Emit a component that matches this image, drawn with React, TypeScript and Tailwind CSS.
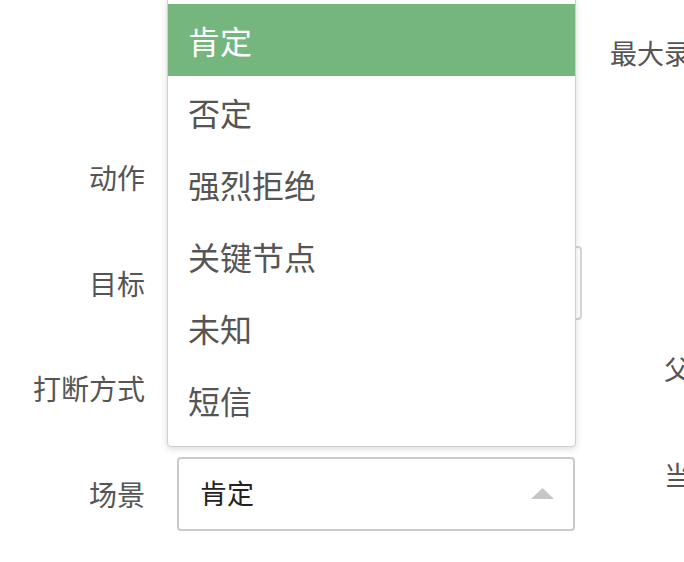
import React from 'react';

const FONT = { fontFamily: '"Noto Sans CJK SC", "Noto Sans", sans-serif' };

const OPTIONS = ['肯定', '否定', '强烈拒绝', '关键节点', '未知', '短信'];

const LEFT_ROWS = [
  { label: '动作', width: 'w-[398px]' },
  { label: '目标', width: 'w-[405px]' },
  { label: '打断方式', width: 'w-[398px]' },
];

const RIGHT_LABELS = ['最大录音时长', '', '', '父级节点', '当前状态'];

const FieldBox = ({ width }: { width: string }) => (
  <div className={`${width} h-[74px] border-2 border-[#d6d6d6] rounded-[4px] bg-white`}></div>
);

const Dropdown = () => (
  <div className="absolute left-[167px] top-[-1px] w-[409px] h-[448px] bg-white border border-[#cfcfcf] rounded-b-[4px] shadow-[0_2px_6px_rgba(0,0,0,0.15)] pt-[4px] z-10">
    {OPTIONS.map((opt, i) => (
      <div
        key={opt}
        className={`h-[72px] flex items-center pl-[20px] text-[32px] ${
          i === 0 ? 'bg-[#75b57e] text-white' : 'text-[#555555]'
        }`}
      >
        {opt}
      </div>
    ))}
  </div>
);

export default function App() {
  return (
    <div className="relative w-[684px] h-[562px] overflow-hidden bg-white" style={FONT}>
      <div className="flex w-[800px]">
        {/* left column */}
        <div className="w-[600px] pt-[140px] flex flex-col gap-[31.5px]">
          {LEFT_ROWS.map((row) => (
            <div key={row.label} className="flex items-center h-[74px]">
              <div className="w-[145px] text-right text-[28px] text-[#555555]">{row.label}</div>
              <div className="ml-[32px]">
                <FieldBox width={row.width} />
              </div>
            </div>
          ))}
          <div className="flex items-center h-[74px]">
            <div className="w-[145px] text-right text-[28px] text-[#555555]">场景</div>
            <div className="ml-[32px] w-[398px] h-[74px] border-2 border-[#cbcbcb] rounded-[4px] bg-white flex items-center justify-between pl-[21px] pr-[19px]">
              <span className="text-[27px] text-[#222222]">肯定</span>
              <svg width="23" height="11" viewBox="0 0 23 11">
                <polygon points="11.5,0 23,11 0,11" fill="#c6c6c6" />
              </svg>
            </div>
          </div>
        </div>

        {/* right column */}
        <div className="w-[172px] pt-[16px] flex flex-col gap-[31.5px]">
          {RIGHT_LABELS.map((label, i) => (
            <div key={i} className="h-[74px] flex items-center justify-end text-[27px] text-[#555555] whitespace-nowrap">
              {label}
            </div>
          ))}
        </div>
      </div>

      <Dropdown />
    </div>
  );
}
